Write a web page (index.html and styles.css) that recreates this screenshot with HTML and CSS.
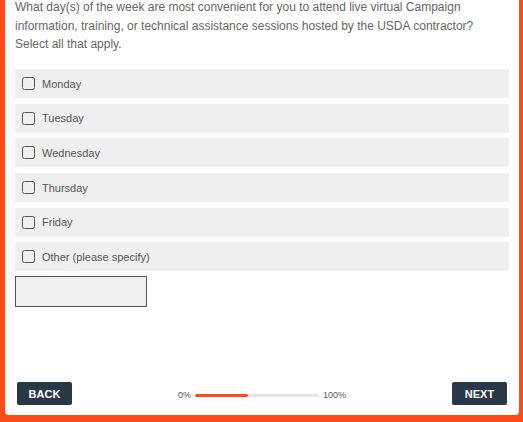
FILE: index.html
```html
<!DOCTYPE html>
<html>
<head>
<meta charset="utf-8">
<link rel="stylesheet" href="styles.css">
</head>
<body>
<div class="panel">
  <p class="question">What day(s) of the week are most convenient for you to attend live virtual Campaign information, training, or technical assistance sessions hosted by the USDA contractor? Select all that apply.</p>
  <div class="options">
    <label class="option"><span class="box"></span><span class="label">Monday</span></label>
    <label class="option"><span class="box"></span><span class="label">Tuesday</span></label>
    <label class="option"><span class="box"></span><span class="label">Wednesday</span></label>
    <label class="option"><span class="box"></span><span class="label">Thursday</span></label>
    <label class="option"><span class="box"></span><span class="label">Friday</span></label>
    <label class="option"><span class="box"></span><span class="label">Other (please specify)</span></label>
  </div>
  <div class="other-input"></div>
  <div class="footer">
    <button class="btn">BACK</button>
    <div class="progress">
      <span class="pct">0%</span>
      <span class="track"><span class="fill" style="width:43%"></span></span>
      <span class="pct">100%</span>
    </div>
    <button class="btn">NEXT</button>
  </div>
</div>
</body>
</html>
```
FILE: styles.css
```css
html, body {
  margin: 0;
  padding: 0;
  background: #fc4a1a;
  height: 422px;
  overflow: hidden;
}
.panel {
  box-sizing: border-box;
  margin: 0 4px 0 5px;
  height: 415px;
  background: #fff;
  border-radius: 0 0 4px 4px;
  padding: 0 10px 10px 10px;
  display: flex;
  flex-direction: column;
  font-family: "Liberation Sans", Arial, sans-serif;
}
.question {
  margin: -2px 0 0 0;
  font-size: 12px;
  line-height: 18.5px;
  color: #666;
}
.options {
  margin-top: 15.5px;
  display: flex;
  flex-direction: column;
  gap: 5.7px;
}
.option {
  height: 29px;
  background: #efefef;
  display: flex;
  align-items: center;
  padding-left: 7px;
}
.box {
  box-sizing: border-box;
  width: 13px;
  height: 13px;
  border: 1.3px solid #555;
  border-radius: 2.5px;
}
.label {
  margin-left: 7px;
  font-size: 11px;
  color: #555;
}
.other-input {
  box-sizing: border-box;
  margin-top: 4.5px;
  width: 132px;
  height: 31px;
  border: 1px solid #555;
  background: #f0f0f0;
}
.footer {
  margin-top: auto;
  display: flex;
  align-items: center;
  justify-content: space-between;
  padding: 0 2px;
}
.btn {
  width: 55px;
  height: 23px;
  border: none;
  border-radius: 2px;
  background: #2a3744;
  color: #fff;
  font-family: "Liberation Sans", Arial, sans-serif;
  font-weight: bold;
  font-size: 11px;
  padding: 0;
}
.progress {
  display: flex;
  align-items: center;
  gap: 4px;
  font-size: 9px;
  color: #555;
  padding-top: 3px;
}
.track {
  width: 124px;
  height: 3px;
  border-radius: 2px;
  background: #e6e6e6;
  display: block;
  overflow: hidden;
}
.fill {
  display: block;
  height: 100%;
  background: #fc4a1a;
  border-radius: 2px;
}
```
